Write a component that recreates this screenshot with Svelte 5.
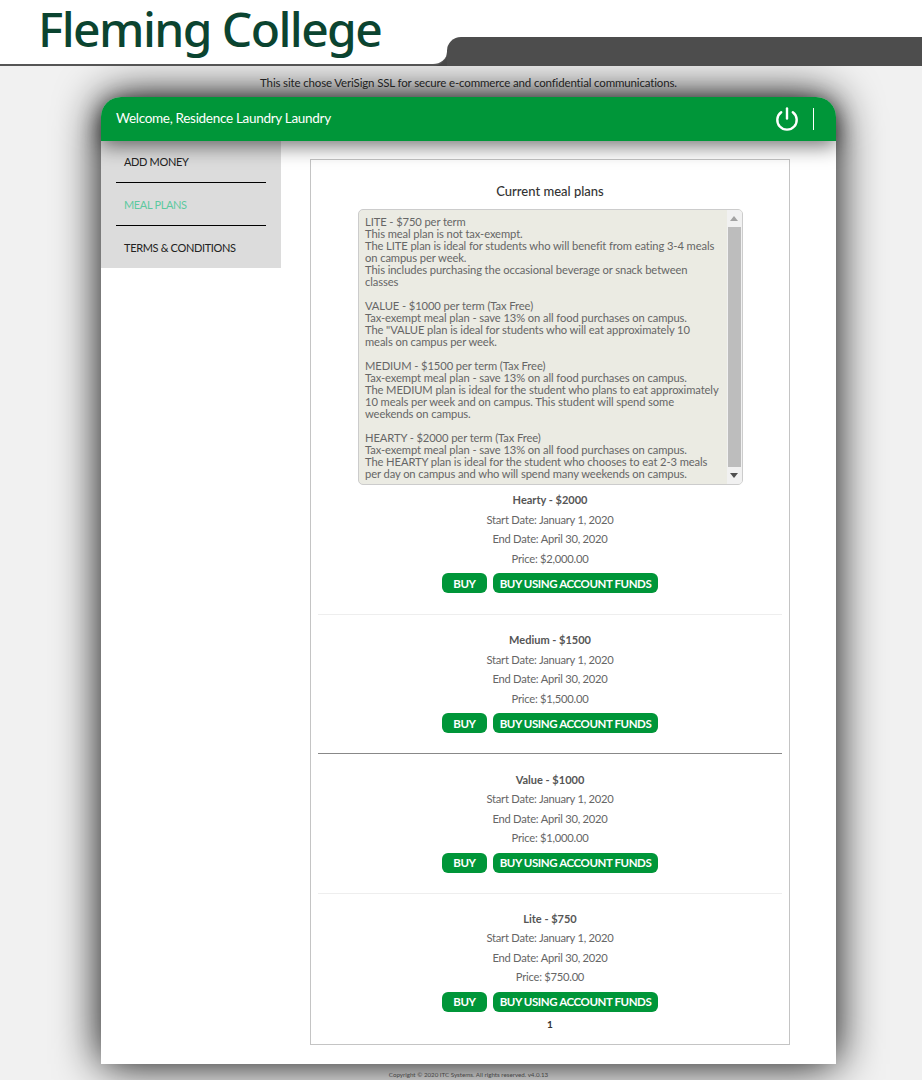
<script>
	const plans = [
		{ name: 'Hearty - $2000', price: '$2,000.00', rule: 'light' },
		{ name: 'Medium - $1500', price: '$1,500.00', rule: 'dark' },
		{ name: 'Value - $1000', price: '$1,000.00', rule: 'light' },
		{ name: 'Lite - $750', price: '$750.00', rule: 'none' }
	];

	const terms = `LITE - $750 per term
This meal plan is not tax-exempt.
The LITE plan is ideal for students who will benefit from eating 3-4 meals
on campus per week.
This includes purchasing the occasional beverage or snack between
classes

VALUE - $1000 per term (Tax Free)
Tax-exempt meal plan - save 13% on all food purchases on campus.
The "VALUE plan is ideal for students who will eat approximately 10
meals on campus per week.

MEDIUM - $1500 per term (Tax Free)
Tax-exempt meal plan - save 13% on all food purchases on campus.
The MEDIUM plan is ideal for the student who plans to eat approximately
10 meals per week and on campus. This student will spend some
weekends on campus.

HEARTY - $2000 per term (Tax Free)
Tax-exempt meal plan - save 13% on all food purchases on campus.
The HEARTY plan is ideal for the student who chooses to eat 2-3 meals
per day on campus and who will spend many weekends on campus.`;
</script>

<header class="site-head">
	<div class="logo">Fleming College</div>
	<div class="band"></div>
</header>

<div class="wrap">
	<p class="notice">This site chose VeriSign SSL for secure e-commerce and confidential communications.</p>

	<div class="card">
		<div class="top-bar">
			<span class="welcome">Welcome, Residence Laundry Laundry</span>
			<svg class="power" viewBox="0 0 24 24" width="24" height="24" fill="none" stroke="#fff" stroke-width="2.4" stroke-linecap="round">
				<path d="M6.2 5.2a9.7 9.7 0 1 0 11.6 0" />
				<path d="M12 1.5v10" />
			</svg>
			<span class="bar-divider"></span>
		</div>

		<div class="body">
			<nav class="side">
				<a href="#money">ADD MONEY</a>
				<a href="#plans" class="active">MEAL PLANS</a>
				<a href="#terms">TERMS &amp; CONDITIONS</a>
			</nav>

			<main class="panel">
				<h2>Current meal plans</h2>

				<div class="terms">
					<div class="terms-text">{terms}</div>
					<div class="scroll">
						<span class="arrow up"></span>
						<span class="thumb"></span>
						<span class="arrow down"></span>
					</div>
				</div>

				{#each plans as plan}
					<section class="plan {plan.rule}">
						<p class="name">{plan.name}</p>
						<p>Start Date: January 1, 2020</p>
						<p>End Date: April 30, 2020</p>
						<p>Price: {plan.price}</p>
						<div class="actions">
							<button class="buy">BUY</button>
							<button class="funds">BUY USING ACCOUNT FUNDS</button>
						</div>
					</section>
				{/each}

				<div class="pager">1</div>
			</main>
		</div>
	</div>

	<footer>Copyright © 2020 ITC Systems. All rights reserved. v4.0.13</footer>
</div>

<style>
	:global(body) {
		background: #f1f1f1;
		font-family: 'Lato', 'Open Sans', sans-serif;
		color: #444;
		overflow: hidden;
	}

	.site-head {
		display: flex;
		height: 66px;
		background: linear-gradient(to bottom, #fff 50px, #4d4d4d 50px);
	}

	.logo {
		box-sizing: border-box;
		width: 447px;
		height: 66px;
		padding-left: 38px;
		background: #fff;
		border-bottom: 2px solid #555;
		border-bottom-right-radius: 14px;
		font-family: 'Noto Sans', sans-serif;
		font-weight: 500;
		font-size: 48px;
		letter-spacing: -1.6px;
		line-height: 57px;
		color: #0b4430;
	}

	.band {
		flex: 1;
		margin-top: 37px;
		background: #4d4d4d;
		border-top-left-radius: 14px;
	}

	.wrap {
		width: 735px;
		margin: 0 86px 0 101px;
	}

	.notice {
		margin: 0;
		height: 31px;
		font-size: 11.5px;
		letter-spacing: -0.15px;
		line-height: 33px;
		text-align: center;
		color: #222;
		white-space: nowrap;
	}

	.card {
		background: #fff;
		border-radius: 20px 20px 0 0;
		box-shadow: 0 0 45px #000;
		height: 967px;
	}

	.top-bar {
		position: relative;
		display: flex;
		align-items: center;
		height: 44px;
		padding: 0 22px 0 15px;
		background: #009639;
		border-radius: 20px 20px 0 0;
		box-shadow: 0 5px 20px rgba(0, 0, 0, 0.55);
	}

	.welcome {
		flex: 1;
		color: #fff;
		font-size: 13.5px;
		letter-spacing: -0.3px;
		margin-bottom: 3px;
	}

	.power {
		margin-right: 14px;
	}

	.bar-divider {
		width: 1px;
		height: 22px;
		background: #fff;
	}

	.body {
		display: flex;
		align-items: flex-start;
	}

	.side {
		width: 180px;
		margin-top: -1px;
		padding: 0 15px;
		box-sizing: border-box;
		background: #dcdcdc;
	}

	.side a {
		display: block;
		height: 42px;
		padding-left: 8px;
		line-height: 44px;
		font-size: 11px;
		letter-spacing: -0.35px;
		color: #222;
		text-decoration: none;
		border-bottom: 1px solid #000;
	}

	.side a:last-child {
		border-bottom: 0;
	}

	.side a.active {
		color: #5cc9a0;
	}

	.panel {
		box-sizing: border-box;
		width: 480px;
		height: 886px;
		margin: 18px 0 0 29px;
		padding: 0 7px;
		border: 1px solid #c4c4c4;
		text-align: center;
		font-size: 12px;
	}

	h2 {
		margin: 0;
		padding-top: 23px;
		height: 49px;
		box-sizing: border-box;
		font-size: 13px;
		line-height: 16px;
		font-weight: 500;
		color: #333;
	}

	.terms {
		display: flex;
		box-sizing: border-box;
		width: 385px;
		height: 276px;
		margin-left: 40px;
		background: #ebebe3;
		border: 1px solid #ccc;
		border-radius: 5px;
		text-align: left;
		overflow: hidden;
	}

	.terms-text {
		flex: 1;
		min-width: 0;
		padding: 6px 0 0 6px;
		font-size: 11.2px;
		letter-spacing: -0.1px;
		line-height: 12px;
		white-space: pre;
		color: #666;
	}

	.scroll {
		flex: none;
		display: flex;
		flex-direction: column;
		align-items: center;
		box-sizing: border-box;
		width: 15px;
		padding-right: 1px;
		background: #f1f1f1;
	}

	.thumb {
		flex: 1;
		width: 13px;
		background: #bdbdbd;
	}

	.arrow {
		flex: none;
		width: 0;
		height: 0;
		border-left: 4px solid transparent;
		border-right: 4px solid transparent;
	}

	.arrow.up {
		margin: 6px 0;
		border-bottom: 5px solid #a3a3a3;
	}

	.arrow.down {
		margin: 6px 0;
		border-top: 5px solid #505050;
	}

	.plan {
		padding: 15.3px 0 20px;
		border-bottom: 1px solid #eee;
	}

	.terms + .plan {
		padding: 5px 0 21px;
	}

	.plan.dark {
		border-bottom-color: #888;
	}

	.plan.none {
		padding-bottom: 5px;
		border-bottom: 0;
	}

	.plan p {
		margin: 0;
		height: 19.5px;
		line-height: 19.5px;
		font-size: 11.2px;
		letter-spacing: -0.25px;
		color: #666;
	}

	.plan p.name {
		font-weight: 700;
		font-size: 11px;
		letter-spacing: 0;
		color: #555;
	}

	.actions {
		display: flex;
		justify-content: center;
		gap: 6px;
		margin-top: 5px;
	}

	button {
		height: 20px;
		padding: 0;
		border: 0;
		border-radius: 6px;
		background: #009639;
		color: #fff;
		font-family: inherit;
		font-size: 11.5px;
		letter-spacing: -0.42px;
		font-weight: 700;
		white-space: nowrap;
	}

	.buy {
		width: 45px;
	}

	.funds {
		width: 165px;
	}

	.pager {
		font-size: 10px;
		font-weight: 700;
		line-height: 14px;
		color: #333;
	}

	footer {
		font-size: 6.2px;
		line-height: 22px;
		text-align: center;
		color: #444;
		position: relative;
	}
</style>
